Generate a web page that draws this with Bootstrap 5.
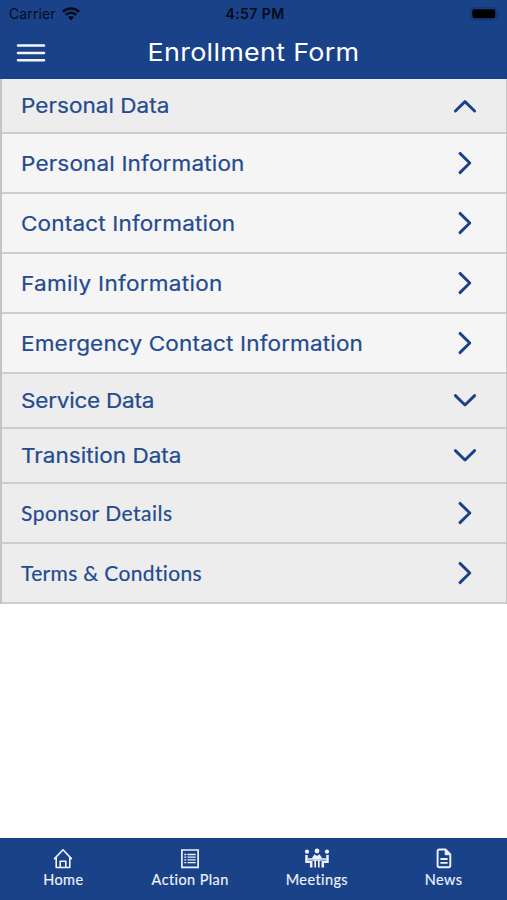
<!DOCTYPE html>
<html lang="en">
<head>
<meta charset="utf-8">
<meta name="viewport" content="width=device-width, initial-scale=1">
<title>Enrollment Form</title>
<link href="https://cdn.jsdelivr.net/npm/bootstrap@5.3.0/dist/css/bootstrap.min.css" rel="stylesheet">
<style>
:root { --brand: #1a4289; --line: #cdcdcd; }
body { font-family: Inter, "Liberation Sans", sans-serif; font-variant-ligatures: none; }
svg { display: block; flex: none; }
.brand-bg { background: var(--brand); }
.status-bar { height: 27px; padding: 0 6px 0 9px; color: #050b18; font-size: 14px; line-height: 27px; }
.status-bar .carrier { letter-spacing: .12px; }
.status-bar .clock { font-weight: 600; letter-spacing: .42px; }
.status-bar .wifi { margin-left: -2px; }
.title-bar { height: 52px; padding-left: 16px; padding-right: 16px; }
.title-bar h1 { font-size: 24.5px; font-weight: 400; letter-spacing: .25px; line-height: 49px; padding-bottom: 2px; transform: scaleX(1.1); }
.title-bar .balance { width: 30px; }
.menu-list { --bs-list-group-border-radius: 0; border: solid #c4c4c4; border-width: 0 1px 0 2px; }
.menu-list .list-group-item {
  height: 60px; padding: 0 29px 0 19px; border: 0; border-bottom: 2px solid var(--line);
  background: #f5f5f5; color: #244a8f; font-size: 20.5px; line-height: 1; letter-spacing: .13px;
  -webkit-text-stroke: .2px currentColor;
}
/* wide letterforms for the menu labels */
.menu-list span { transform: scaleX(1.1); transform-origin: left; padding-top: 2px; }
.menu-list .section-row { height: 55px; background: #ededed; letter-spacing: .02px; }
.menu-list .link-row { background: #ededed; font-family: Lato, sans-serif; font-size: 21px; letter-spacing: .5px; }
.menu-list .link-row span { transform: none; padding: 0 0 2px; }
.menu-list .tight { letter-spacing: -.22px; }
.menu-list .loose { letter-spacing: .24px; }
.menu-list .terms { letter-spacing: .34px; }
.tab-bar { height: 62px; padding-top: 10px; }
.tab-bar a { font: 14.5px/18px Lato, sans-serif; letter-spacing: .4px; color: #eef2fa; -webkit-text-stroke: .15px currentColor; }
.tab-bar svg { margin-bottom: 2px; }
</style>
</head>
<body class="vh-100 d-flex flex-column bg-white overflow-hidden">
<svg width="0" height="0" class="position-absolute" aria-hidden="true">
  <defs>
    <symbol id="chev" viewBox="0 0 24 24"><path d="M7 2.400 16.800 12 7 21.600" fill="none" stroke="#1a4289" stroke-width="2.900" stroke-linecap="round" stroke-linejoin="round"/></symbol>
    <symbol id="chev-down" viewBox="0 0 24 24"><path d="M2.400 6.600 12 16 21.600 6.600" fill="none" stroke="#1a4289" stroke-width="2.900" stroke-linecap="round" stroke-linejoin="round"/></symbol>
    <symbol id="chev-up" viewBox="0 0 24 24"><path d="M2.400 17 12 7.600 21.600 17" fill="none" stroke="#1a4289" stroke-width="2.900" stroke-linecap="round" stroke-linejoin="round"/></symbol>
  </defs>
</svg>

<header class="brand-bg">
  <div class="status-bar row g-0 align-items-center">
    <div class="col d-flex align-items-center gap-2">
      <span class="carrier">Carrier</span>
      <svg class="wifi" width="18" height="14" viewBox="0 0 18 14" fill="none" stroke="#050b18" stroke-width="2.4"><path d="M.9 4.800a11.600 11.600 0 0 1 16.200 0M3.700 7.900a7.500 7.500 0 0 1 10.600 0"/><path d="M6 10.200a4.200 4.200 0 0 1 6 0L9 13.400Z" fill="#050b18" stroke="none"/></svg>
    </div>
    <div class="col-auto clock">4:57 PM</div>
    <div class="col d-flex justify-content-end">
      <svg width="31" height="14" viewBox="0 0 31 14"><rect x=".8" y=".8" width="26" height="12" rx="3.5" fill="none" stroke="#12336e" stroke-width="1"/><rect x="2.3" y="2.3" width="23" height="9" rx="2.2" fill="#000"/><path d="M28.600 5.200v3.400q1.400-.5 1.400-1.700t-1.400-1.700Z" fill="#12336e"/></svg>
    </div>
  </div>
  <div class="title-bar d-flex align-items-center">
    <svg width="30" height="20" viewBox="0 0 30 20" stroke="#f4f7fd" stroke-width="2.5" stroke-linecap="round"><path d="M2 2.400h26M2 9.900h26M2 17.200h26"/></svg>
    <h1 class="flex-grow-1 text-center text-white m-0">Enrollment Form</h1>
    <div class="balance"></div>
  </div>
</header>

<main class="flex-grow-1">
  <div class="list-group menu-list">
    <a class="list-group-item section-row d-flex align-items-center justify-content-between"><span>Personal Data</span><svg width="24" height="24"><use href="#chev-up"/></svg></a>
    <a class="list-group-item d-flex align-items-center justify-content-between"><span>Personal Information</span><svg width="24" height="24"><use href="#chev"/></svg></a>
    <a class="list-group-item d-flex align-items-center justify-content-between"><span>Contact Information</span><svg width="24" height="24"><use href="#chev"/></svg></a>
    <a class="list-group-item loose d-flex align-items-center justify-content-between"><span>Family Information</span><svg width="24" height="24"><use href="#chev"/></svg></a>
    <a class="list-group-item d-flex align-items-center justify-content-between"><span>Emergency Contact Information</span><svg width="24" height="24"><use href="#chev"/></svg></a>
    <a class="list-group-item section-row tight d-flex align-items-center justify-content-between"><span>Service Data</span><svg width="24" height="24"><use href="#chev-down"/></svg></a>
    <a class="list-group-item section-row d-flex align-items-center justify-content-between"><span>Transition Data</span><svg width="24" height="24"><use href="#chev-down"/></svg></a>
    <a class="list-group-item link-row d-flex align-items-center justify-content-between"><span>Sponsor Details</span><svg width="24" height="24"><use href="#chev"/></svg></a>
    <a class="list-group-item link-row terms d-flex align-items-center justify-content-between"><span>Terms &amp; Condtions</span><svg width="24" height="24"><use href="#chev"/></svg></a>
  </div>
</main>

<nav class="tab-bar brand-bg row g-0 text-center">
  <a class="col d-flex flex-column align-items-center text-decoration-none">
    <svg width="20" height="21" viewBox="0 0 20 21" fill="none" stroke="#eef2fa" stroke-width="1.6" stroke-linejoin="round" stroke-linecap="round"><path d="M1.600 10.600 10 1.800l8.400 8.800M3.200 9.200v10.300h13.600V9.200M7.200 19.300v-6h5.600v6"/></svg>
    Home</a>
  <a class="col d-flex flex-column align-items-center text-decoration-none">
    <svg width="20" height="21" viewBox="0 0 20 21" fill="none" stroke="#eef2fa" stroke-width="1.7"><path d="M1.900 2h16.200v17.300H1.900Z"/><path d="M4.300 6.500h2M4.300 9.200h2M4.300 11.900h2M4.300 14.600h2M7.500 6.500h8.200M7.500 9.200h8.200M7.500 11.900h8.200M7.500 14.600h8.200" stroke-width="1.300"/></svg>
    Action Plan</a>
  <a class="col d-flex flex-column align-items-center text-decoration-none">
    <svg width="26" height="21" viewBox="0 0 26 21" fill="none" stroke="#eef2fa"><g fill="#eef2fa" stroke="none"><circle cx="3" cy="3.700" r="2.100"/><circle cx="13" cy="3" r="2.400"/><circle cx="23" cy="3.700" r="2.100"/><path d="M8.300 9.500 10.500 6.300 13 8l2.500-1.700 2.200 3.200V11H8.300Z"/></g><path d="M2.500 7v6.800h4.700v5.700" stroke-width="2.500"/><path d="M23.500 7v6.800h-4.700v5.700" stroke-width="2.500"/><path d="M3.500 11h5M17.500 11h5M8.500 12h9M11.200 12v7.500M14.800 12v7.500" stroke-width="1.700"/></svg>
    Meetings</a>
  <a class="col d-flex flex-column align-items-center text-decoration-none">
    <svg width="16" height="21" viewBox="0 0 16 21" fill="none" stroke="#eef2fa" stroke-width="1.900" stroke-linejoin="round"><path d="M9.500 1.500H3.300Q1.600 1.500 1.600 3.200V17.600Q1.600 19.300 3.300 19.300H12.600Q14.300 19.300 14.300 17.600V6.300Z"/><path d="M9.200 1.500v5.200h5.100Z" fill="#eef2fa" stroke-width="1"/><path d="M4.400 11h7.200M4.400 14.900h7.200"/></svg>
    News</a>
</nav>
<script src="https://cdn.jsdelivr.net/npm/bootstrap@5.3.0/dist/js/bootstrap.bundle.min.js"></script>
</body>
</html>
